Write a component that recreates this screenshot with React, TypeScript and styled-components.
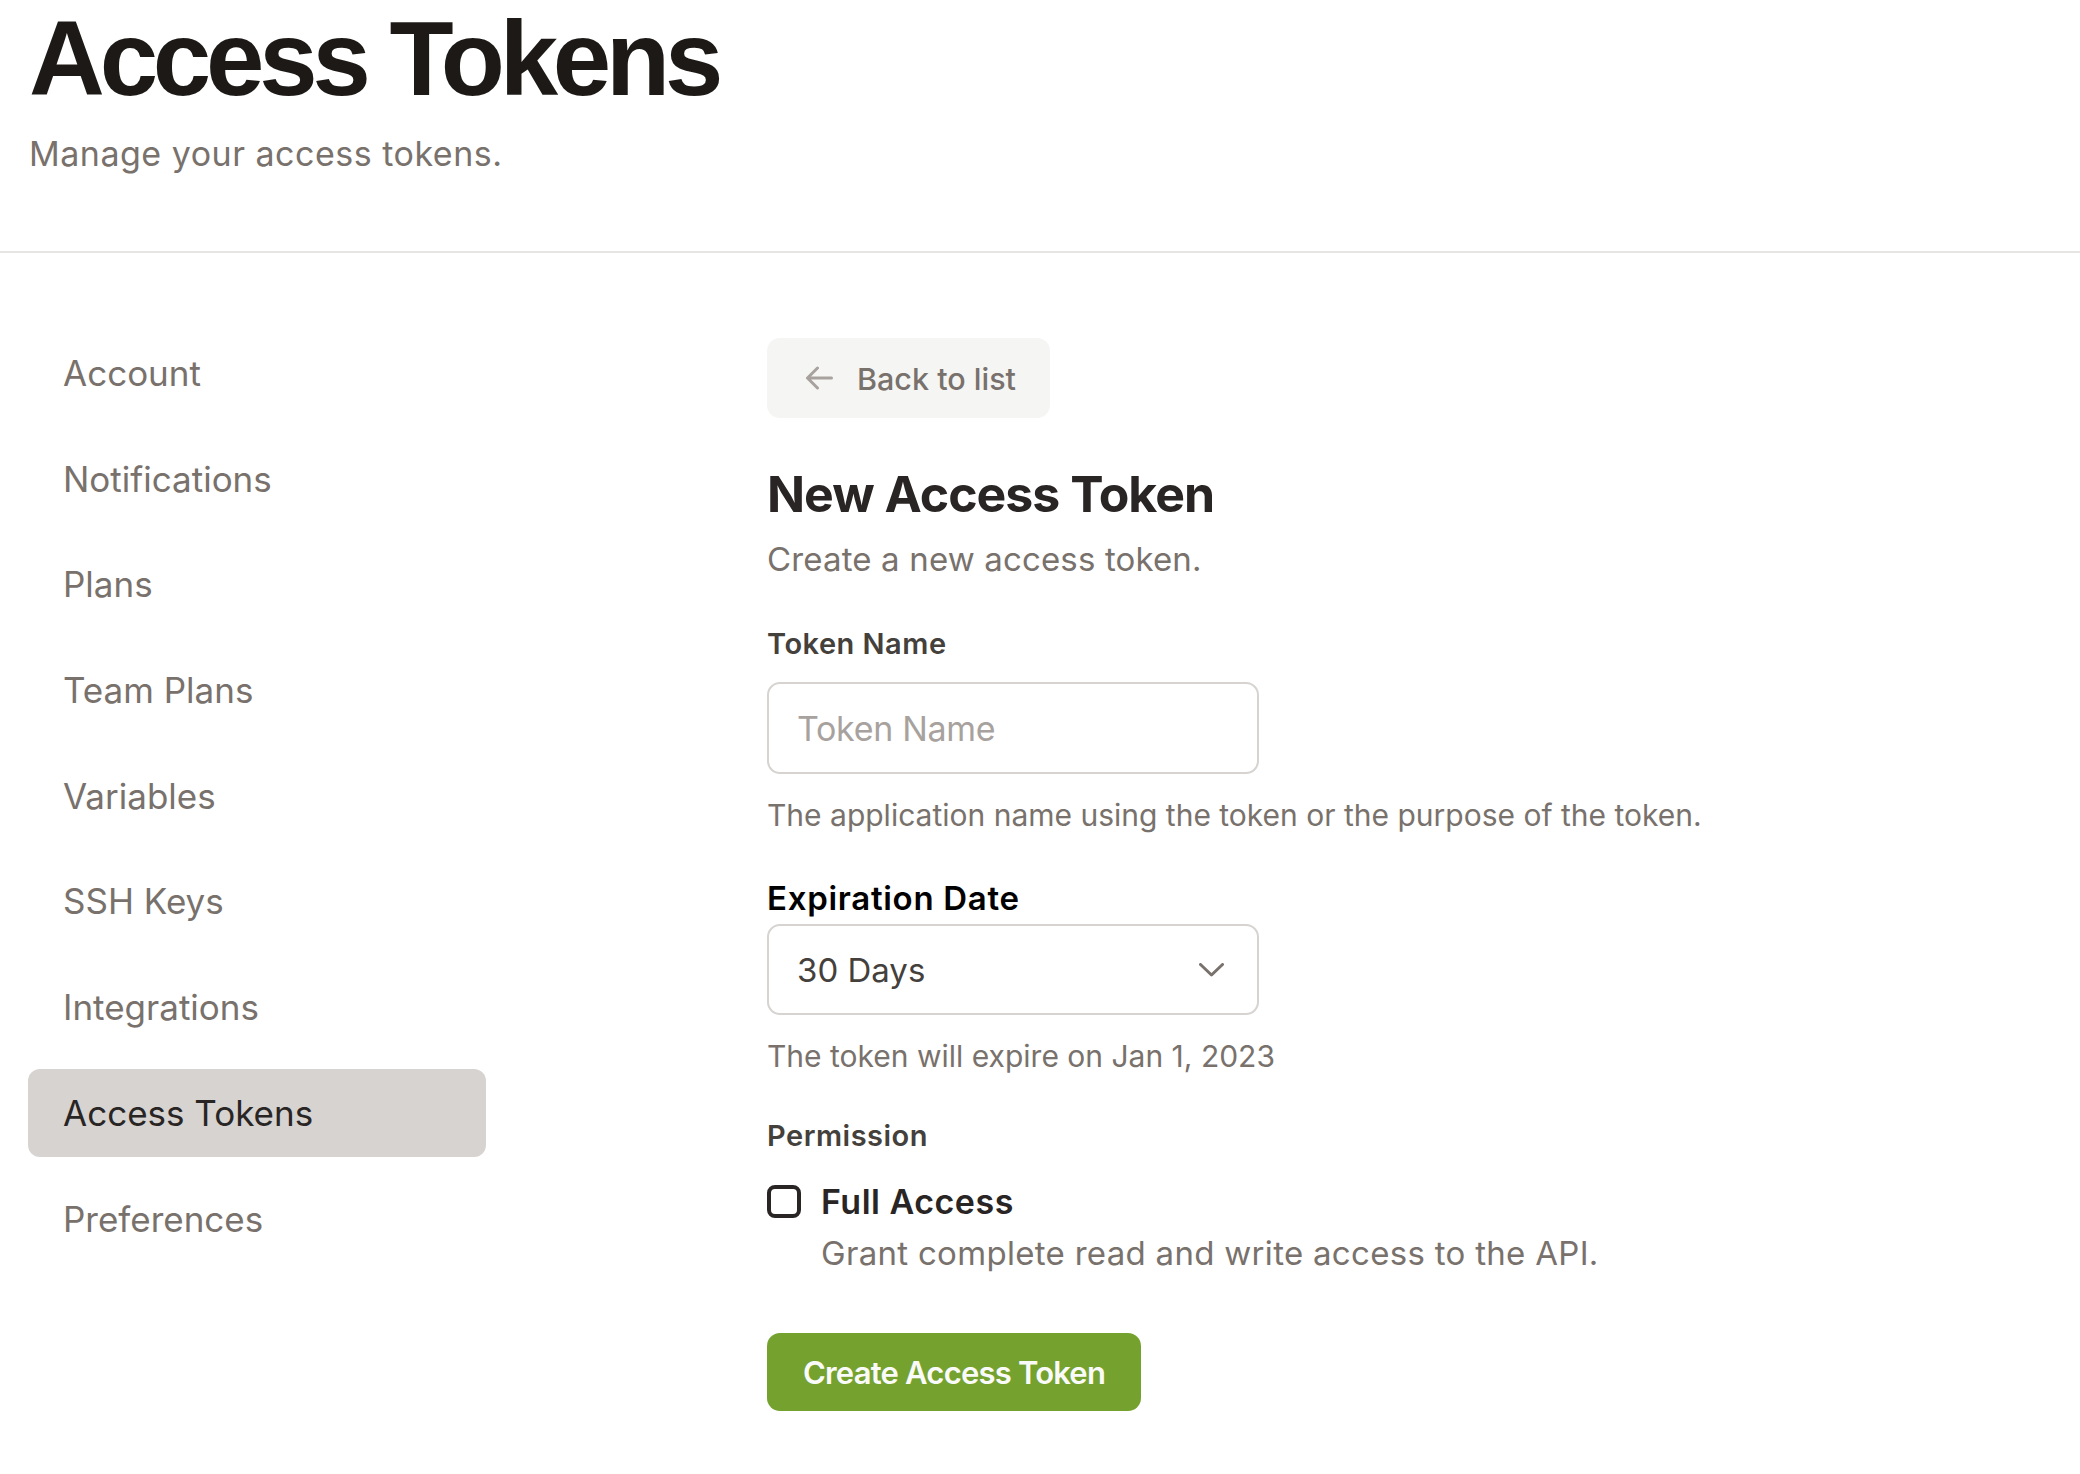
import React from "react";
import styled, { createGlobalStyle } from "styled-components";

const GlobalStyle = createGlobalStyle`
  html, body {
    margin: 0;
    padding: 0;
    background: #ffffff;
  }
  body {
    font-family: Inter, "Noto Sans", sans-serif;
    -webkit-font-smoothing: antialiased;
  }
  *, *::before, *::after {
    box-sizing: border-box;
  }
`;

const Page = styled.div`
  min-height: 1474px;
  background: #ffffff;
`;

const Header = styled.header`
  padding: 4px 29px 77px;
  border-bottom: 2px solid #e7e5e4;
`;

const Title = styled.h1`
  margin: 0;
  font-family: "Liberation Sans", Arial, sans-serif;
  font-weight: 700;
  font-size: 105px;
  line-height: 110px;
  letter-spacing: -5.2px;
  color: #1c1917;
`;

const Lead = styled.p<{ $top: number; $size: number; $tracking: number }>`
  margin: ${(p) => p.$top}px 0 0;
  font-size: ${(p) => p.$size}px;
  line-height: 40px;
  letter-spacing: ${(p) => p.$tracking}px;
  color: #78716c;
`;

const Body = styled.div`
  display: flex;
  align-items: flex-start;
  gap: 281px;
  padding: 76px 0 0 28px;
`;

const Sidebar = styled.nav`
  width: 458px;
  flex: none;
  display: flex;
  flex-direction: column;
  gap: 17.7px;
`;

const NavItem = styled.a<{ $active?: boolean }>`
  display: flex;
  align-items: center;
  height: 88px;
  padding-left: 35px;
  border-radius: 12px;
  font-size: 35px;
  text-decoration: none;
  color: ${(p) => (p.$active ? "#292524" : "#78716c")};
  background: ${(p) => (p.$active ? "#d6d3d1" : "transparent")};
`;

const Main = styled.main`
  display: flex;
  flex-direction: column;
  align-items: flex-start;
  padding-top: 9px;
`;

const BackButton = styled.button`
  display: inline-flex;
  align-items: center;
  gap: 24px;
  height: 80px;
  padding: 0 34px 0 38px;
  border: none;
  border-radius: 13px;
  background: #f5f5f4;
  font-family: inherit;
  font-size: 30.5px;
  font-weight: 500;
  color: #78716c;
  cursor: pointer;
`;

const Heading = styled.h2`
  margin: 46px 0 0;
  font-size: 50px;
  line-height: 60px;
  font-weight: 700;
  letter-spacing: -1px;
  color: #292524;
`;

const Label = styled.label<{ $top: number; $size: number; $color: string; $tracking: number }>`
  display: block;
  margin-top: ${(p) => p.$top}px;
  font-size: ${(p) => p.$size}px;
  line-height: 36px;
  font-weight: 600;
  letter-spacing: ${(p) => p.$tracking}px;
  color: ${(p) => p.$color};
`;

const TextInput = styled.input`
  display: block;
  width: 492px;
  height: 92px;
  margin-top: 20px;
  padding: 0 28px;
  border: 2px solid #d6d3d1;
  border-radius: 13px;
  font-family: inherit;
  font-size: 34px;
  letter-spacing: -0.3px;
  color: #292524;
  background: #ffffff;
  outline: none;

  &::placeholder {
    color: #a8a29e;
  }
`;

const Helper = styled.p`
  margin: 23px 0 0;
  font-size: 30px;
  line-height: 36px;
  color: #78716c;
`;

const SelectBox = styled.div`
  display: flex;
  align-items: center;
  justify-content: space-between;
  width: 492px;
  height: 91px;
  margin-top: 8px;
  padding: 0 33px 0 28px;
  border: 2px solid #d6d3d1;
  border-radius: 13px;
  font-size: 33px;
  color: #44403c;
`;

const CheckRow = styled.div`
  display: flex;
  align-items: center;
  gap: 20px;
  height: 40px;
  margin-top: 27px;
`;

const CheckBox = styled.span`
  display: block;
  width: 34px;
  height: 33px;
  border: 4px solid #292524;
  border-radius: 8px;
`;

const CheckLabel = styled.span`
  font-size: 34px;
  font-weight: 600;
  letter-spacing: 0.5px;
  color: #292524;
`;

const CheckDesc = styled.p`
  margin: 12px 0 0;
  padding-left: 54px;
  font-size: 33px;
  line-height: 40px;
  letter-spacing: 0.3px;
  color: #78716c;
`;

const PrimaryButton = styled.button`
  height: 78px;
  margin-top: 60px;
  padding: 0 36px;
  border: none;
  border-radius: 13px;
  background: #75a22e;
  font-family: inherit;
  font-size: 31px;
  font-weight: 600;
  letter-spacing: -0.8px;
  color: #fafaf9;
  cursor: pointer;
`;

const navItems = [
  "Account",
  "Notifications",
  "Plans",
  "Team Plans",
  "Variables",
  "SSH Keys",
  "Integrations",
  "Access Tokens",
  "Preferences",
];

const ArrowLeft = () => (
  <svg width="28" height="24" viewBox="0 0 28 24" fill="none">
    <path
      d="M26.5 12H2.5M12.5 2L2.5 12L12.5 22"
      stroke="#a8a29e"
      strokeWidth="3"
      strokeLinecap="round"
      strokeLinejoin="round"
    />
  </svg>
);

const Chevron = () => (
  <svg width="25" height="14" viewBox="0 0 25 14" fill="none">
    <path
      d="M1.5 1.5L12.5 12L23.5 1.5"
      stroke="#78716c"
      strokeWidth="3"
      strokeLinecap="round"
      strokeLinejoin="round"
    />
  </svg>
);

export default function App() {
  return (
    <Page>
      <GlobalStyle />
      <Header>
        <Title>Access Tokens</Title>
        <Lead $top={20} $size={34} $tracking={0.5}>
          Manage your access tokens.
        </Lead>
      </Header>
      <Body>
        <Sidebar>
          {navItems.map((item) => (
            <NavItem key={item} href="#" $active={item === "Access Tokens"}>
              {item}
            </NavItem>
          ))}
        </Sidebar>
        <Main>
          <BackButton type="button">
            <ArrowLeft />
            Back to list
          </BackButton>
          <Heading>New Access Token</Heading>
          <Lead $top={15} $size={33} $tracking={0.15}>
            Create a new access token.
          </Lead>

          <Label $top={47} $size={29} $color="#44403c" $tracking={0.5} htmlFor="token-name">
            Token Name
          </Label>
          <TextInput id="token-name" placeholder="Token Name" />
          <Helper>The application name using the token or the purpose of the token.</Helper>

          <Label $top={47} $size={33} $color="#000000" $tracking={0.7}>
            Expiration Date
          </Label>
          <SelectBox role="combobox">
            <span>30 Days</span>
            <Chevron />
          </SelectBox>
          <Helper>The token will expire on Jan 1, 2023</Helper>

          <Label $top={44} $size={29} $color="#44403c" $tracking={0.5}>
            Permission
          </Label>
          <CheckRow>
            <CheckBox />
            <CheckLabel>Full Access</CheckLabel>
          </CheckRow>
          <CheckDesc>Grant complete read and write access to the API.</CheckDesc>

          <PrimaryButton type="button">Create Access Token</PrimaryButton>
        </Main>
      </Body>
    </Page>
  );
}
